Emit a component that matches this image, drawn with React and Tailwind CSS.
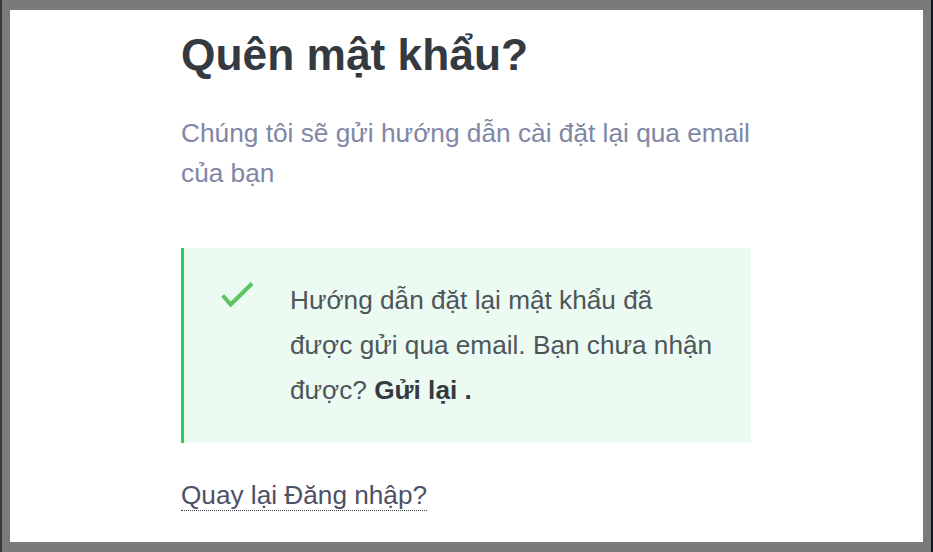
import { Fragment } from "react";

function CheckIcon() {
  return (
    <svg width="36" height="28" viewBox="0 0 36 28" className="mt-[2px] mr-[34px] shrink-0">
      <polyline
        points="2.7,15.5 10.7,24.5 32,3.5"
        fill="none"
        stroke="#5cc463"
        strokeWidth="4"
        strokeLinecap="butt"
        strokeLinejoin="miter"
      />
    </svg>
  );
}

export default function App() {
  return (
    <div
      className="h-[552px] w-full bg-[#7a7a7a] border-l-2 border-l-[#3a3a3a] border-r-2 border-r-[#101828] pl-[8px] pr-[8px] pt-[10px] pb-[10px]"
      style={{ fontFamily: '"Liberation Sans", Arial, sans-serif' }}
    >
      <div className="h-full bg-white pl-[171px]">
        <div className="w-[570px] pt-[18px]">
          {/* Title */}
          <h1 className="text-[44.3px] leading-[53px] font-bold text-[#343a40]">Quên mật khẩu?</h1>

          {/* Subtitle */}
          <p className="mt-[32px] text-[26.25px] leading-[40px] text-[#8087a6]">
            Chúng tôi sẽ gửi hướng dẫn cài đặt lại qua email của bạn
          </p>

          {/* Success alert */}
          <div className="mt-[55px] flex items-start border-l-[3px] border-l-[#34c759] bg-[#ebfbf1] pl-[36px] pr-[36px] py-[30px]">
            <CheckIcon />
            <p className="flex-1 text-[26.2px] leading-[45px] text-[#4f555c]">
              Hướng dẫn đặt lại mật khẩu đã được gửi qua email. Bạn chưa nhận được?{" "}
              <b className="font-bold text-[#343a40]">Gửi lại .</b>
            </p>
          </div>

          {/* Back link */}
          <div className="mt-[37px]">
            <a
              href="#"
              className="inline-block text-[26.2px] leading-[30px] text-[#4c5166] border-b border-dotted border-b-[#444]"
            >
              Quay lại Đăng nhập?
            </a>
          </div>
        </div>
      </div>
    </div>
  );
}
